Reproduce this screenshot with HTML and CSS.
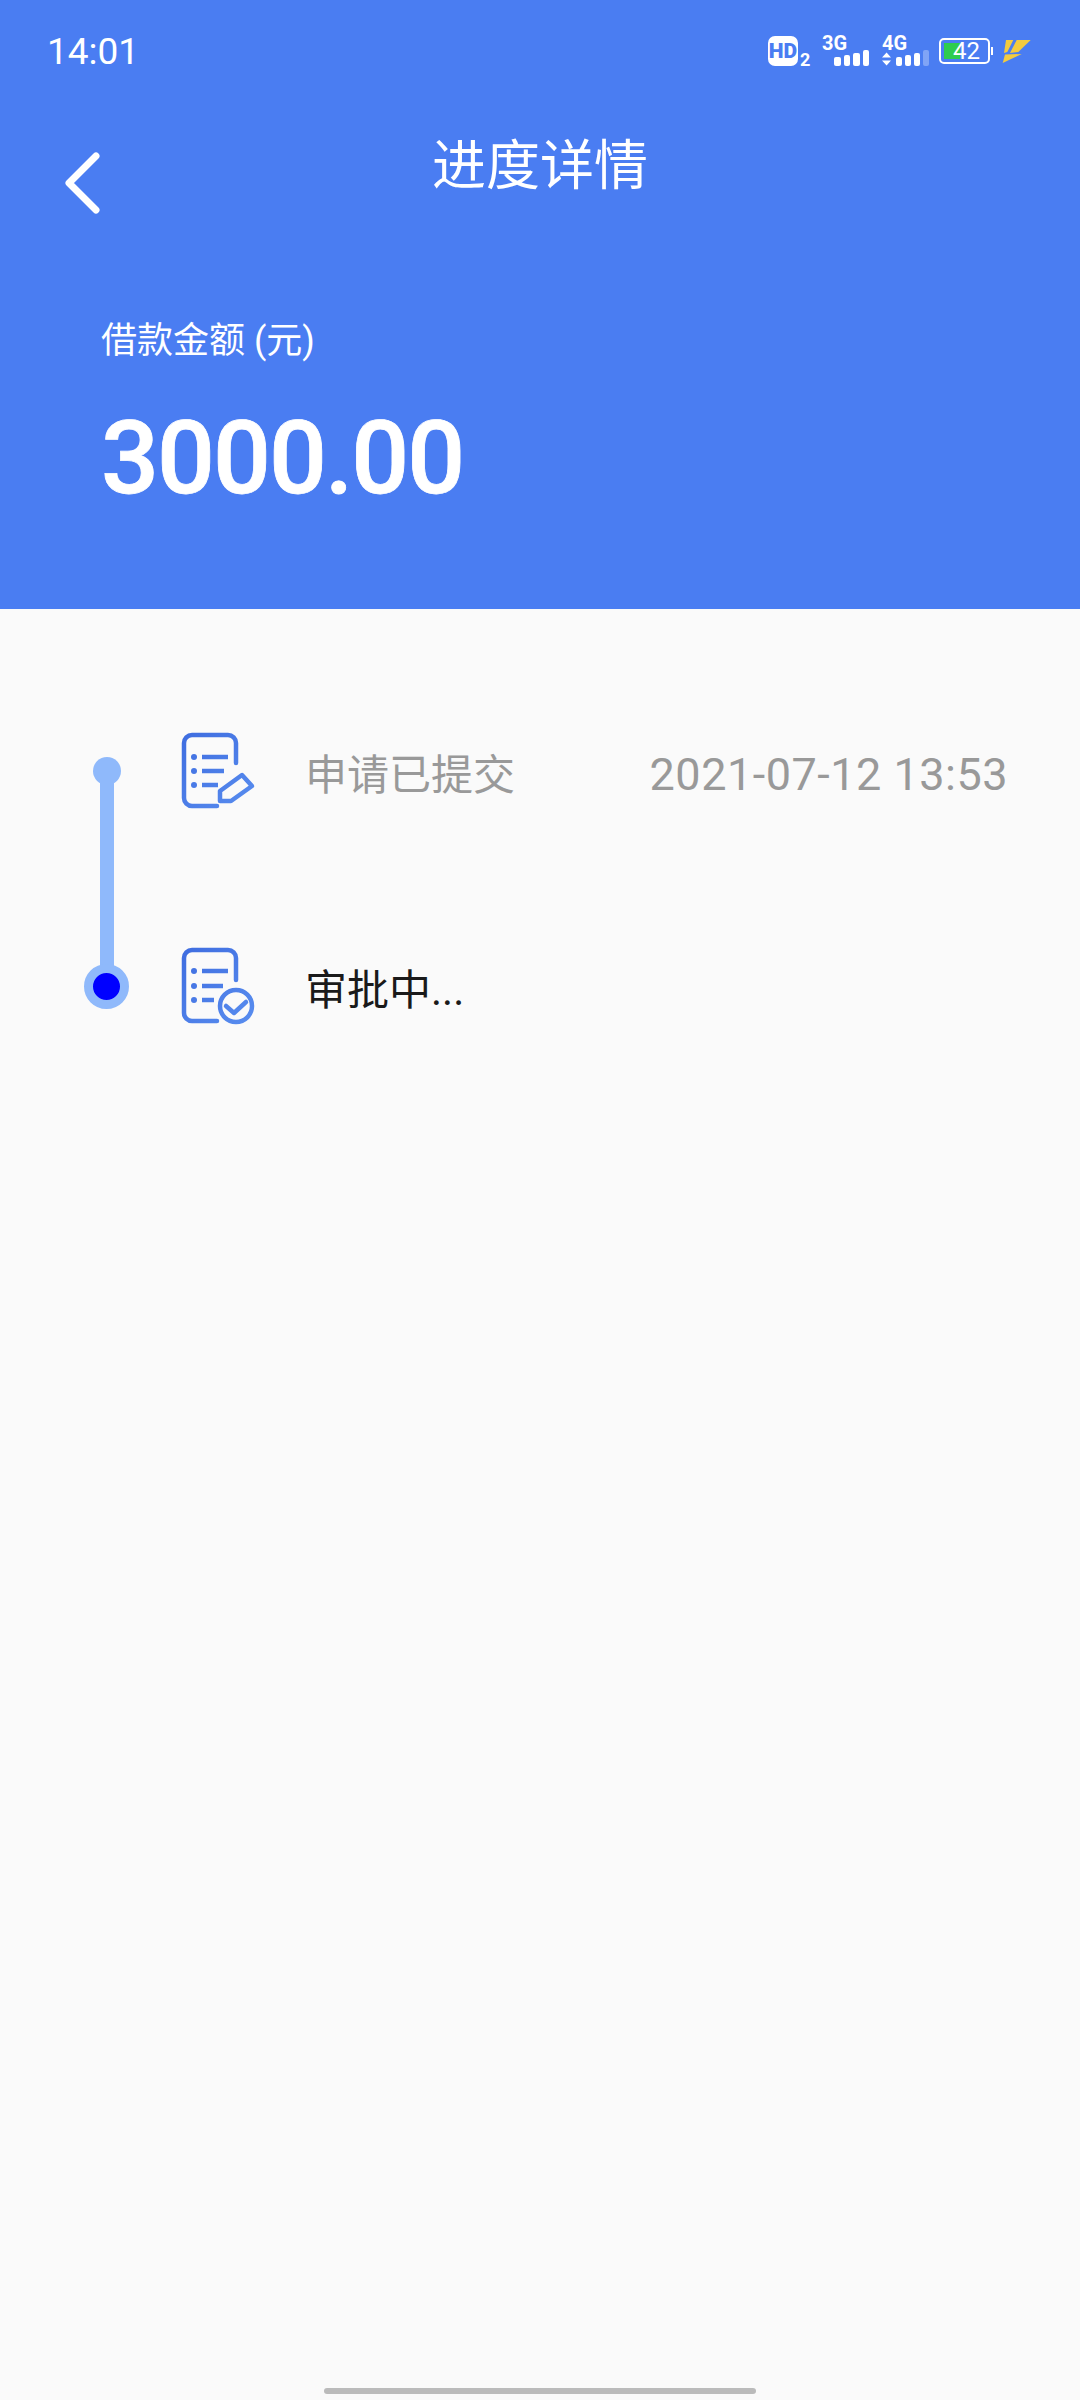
FILE: index.html
```html
<!DOCTYPE html>
<html lang="zh-CN">
<head>
    <meta charset="UTF-8">
    <meta name="viewport" content="width=device-width, initial-scale=1.0">
    <title>进度详情</title>
    <link rel="stylesheet" href="styles.css">
</head>
<body>

    <header class="header">
        <div class="status-bar">
            <span class="clock">14:01</span>
            <div class="status-icons">
                <span class="hd"><span class="hd-badge">HD</span><span class="hd-sim">2</span></span>
                <span class="signal">
                    <span class="net">3G</span>
                    <span class="bars"><i class="b1"></i><i class="b2"></i><i class="b3"></i><i class="b4"></i></span>
                </span>
                <span class="signal signal-data">
                    <span class="net">4G</span>
                    <span class="bars">
                        <svg class="arrows" width="10" height="14" viewBox="0 0 10 14"><path d="M5 0L10 5.500H0ZM5 14L0 8.500H10Z" fill="#fff"/></svg>
                        <i class="b1"></i><i class="b2"></i><i class="b3"></i><i class="b4 off"></i>
                    </span>
                </span>
                <span class="battery">
                    <span class="battery-body"><span class="battery-fill"></span><span class="battery-num">42</span></span>
                    <span class="battery-cap"></span>
                </span>
                <svg class="bolt" width="31" height="27" viewBox="0 0 31 27">
                    <path d="M4 2H11.300L5.300 14L2 15Z" fill="#f3cb3f"/>
                    <path d="M14.700 2H28.700L16.300 14L8 15Z" fill="#f3cb3f"/>
                    <path d="M0.700 25L3 16.500L19.700 16Z" fill="#f3cb3f"/>
                </svg>
            </div>
        </div>

        <div class="nav">
            <svg class="back" width="38" height="62" viewBox="0 0 38 62">
                <path d="M33 4L6 31L33 58" fill="none" stroke="#fff" stroke-width="7" stroke-linecap="round" stroke-linejoin="round"/>
            </svg>
            <h1 class="title">进度详情</h1>
        </div>

        <div class="loan">
            <p class="loan-label">借款金额 (元)</p>
            <p class="loan-amount">3000.00</p>
        </div>
    </header>

    <main class="progress">
        <div class="rail">
            <span class="rail-dot"></span>
            <span class="rail-line"></span>
            <span class="rail-end"></span>
        </div>

        <div class="steps">
            <div class="step step-done">
                <svg class="step-icon" width="78" height="82" viewBox="0 0 78 82">
                    <defs>
                        <linearGradient id="docBlue" gradientUnits="userSpaceOnUse" x1="0" y1="0" x2="78" y2="82">
                            <stop offset="0" stop-color="#3d6bdf"/>
                            <stop offset="1" stop-color="#5a8ff0"/>
                        </linearGradient>
                    </defs>
                    <g fill="none" stroke="url(#docBlue)" stroke-width="4.500">
                        <path d="M57 33V13a8 8 0 0 0-8-8H13a8 8 0 0 0-8 8V68a8 8 0 0 0 8 8H38" stroke-linecap="round"/>
                        <path d="M23 27H49M23 41H45M23 55H39"/>
                        <path d="M41 61L63 45L73 56L52 71H41Z" stroke-linejoin="round"/>
                    </g>
                    <g fill="url(#docBlue)">
                        <circle cx="15" cy="27" r="3"/>
                        <circle cx="15" cy="41" r="3"/>
                        <circle cx="15" cy="55" r="3"/>
                    </g>
                </svg>
                <span class="step-name">申请已提交</span>
                <span class="step-time">2021-07-12 13:53</span>
            </div>

            <div class="step">
                <svg class="step-icon" width="78" height="82" viewBox="0 0 78 82">
                    <g fill="none" stroke="url(#docBlue)" stroke-width="4.500">
                        <path d="M57 35V13a8 8 0 0 0-8-8H13a8 8 0 0 0-8 8V68a8 8 0 0 0 8 8H38" stroke-linecap="round"/>
                        <path d="M23 26H49M23 41H44M23 55H35"/>
                        <circle cx="57" cy="61" r="16" fill="#fafafa"/>
                        <path d="M47 61L55 68L67 57" stroke-linecap="round" stroke-linejoin="round"/>
                    </g>
                    <g fill="url(#docBlue)">
                        <circle cx="15" cy="26" r="3"/>
                        <circle cx="15" cy="41" r="3"/>
                        <circle cx="15" cy="55" r="3"/>
                    </g>
                </svg>
                <span class="step-name">审批中...</span>
            </div>
        </div>
    </main>

    <div class="home-bar"></div>

</body>
</html>
```

FILE: styles.css
```css
* {
    box-sizing: border-box;
}
body {
    margin: 0;
    height: 2400px;
    display: flex;
    flex-direction: column;
    background-color: #fafafa;
    font-family: Roboto, "Noto Sans CJK SC", sans-serif;
}
.header {
    height: 609px;
    background-color: #4a7df2;
    color: #fff;
    padding: 30px 47px 0;
}
.status-bar {
    display: flex;
    justify-content: space-between;
    align-items: center;
    height: 42px;
}
.clock {
    font-size: 37px;
}
.status-icons {
    display: flex;
    align-items: center;
}
.hd {
    display: flex;
    align-items: flex-end;
    width: 54px;
}
.hd-badge {
    width: 30px;
    height: 30px;
    border-radius: 7px;
    background: #fff;
    color: #4a7df2;
    font-size: 21px;
    font-weight: 900;
    line-height: 30px;
    text-align: center;
}
.hd-sim {
    font-size: 18px;
    font-weight: 700;
    line-height: 13px;
    margin-left: 2px;
}
.signal {
    width: 60px;
    display: flex;
    flex-direction: column;
    height: 30px;
}
.net {
    font-size: 20px;
    font-weight: 700;
    line-height: 14px;
}
.bars {
    display: flex;
    align-items: flex-end;
    justify-content: flex-end;
    gap: 3px;
    height: 16px;
    padding-right: 13px;
}
.signal-data {
    width: 57px;
}
.signal-data .bars {
    padding-right: 10px;
}
.bars i {
    display: block;
    width: 6.5px;
    background: #fff;
    border-radius: 2px;
}
.bars .b1 { height: 9px; }
.bars .b2 { height: 11px; }
.bars .b3 { height: 13px; }
.bars .b4 { height: 16px; }
.bars .off {
    background: rgba(255,255,255,0.3);
}
.arrows {
    margin-right: 2px;
}
.battery {
    display: flex;
    align-items: center;
    width: 63px;
}
.battery-body {
    position: relative;
    width: 51px;
    height: 26px;
    border: 2px solid #fff;
    border-radius: 5px;
}
.battery-fill {
    position: absolute;
    left: 3px;
    top: 3px;
    bottom: 3px;
    width: 16px;
    background: #2ecc4f;
}
.battery-num {
    position: absolute;
    left: 0;
    right: 0;
    top: 0;
    font-size: 24px;
    line-height: 22px;
    text-align: center;
    padding-left: 4px;
}
.battery-cap {
    width: 2px;
    height: 8px;
    margin-left: 1px;
    background: #fff;
}
.nav {
    position: relative;
    height: 100px;
    margin-top: 60px;
    display: flex;
    justify-content: center;
}
.back {
    position: absolute;
    left: 16px;
    top: 20px;
}
.title {
    margin: 0;
    font-size: 54px;
    font-weight: 400;
    line-height: 70px;
}
.loan {
    padding-left: 54px;
    margin-top: 86px;
}
.loan-label {
    margin: 0;
    font-size: 36px;
    line-height: 46px;
}
.loan-amount {
    margin: 39px 0 0;
    font-size: 102px;
    font-weight: 500;
    letter-spacing: -2px;
    -webkit-text-stroke: 0.8px #fff;
    line-height: 110px;
}
.progress {
    display: flex;
    padding: 148px 0 0 84px;
}
.rail {
    width: 45px;
    display: flex;
    flex-direction: column;
    align-items: center;
}
.rail-dot {
    width: 28px;
    height: 28px;
    border-radius: 50%;
    background: #8fb9fb;
}
.rail-line {
    width: 14px;
    height: 183px;
    margin-top: -2px;
    background: #8fb9fb;
}
.rail-end {
    width: 45px;
    height: 45px;
    margin-top: -2px;
    border-radius: 50%;
    background: #00f;
    border: 9px solid #8fb9fb;
}
.steps {
    flex: 1;
    display: flex;
    flex-direction: column;
    gap: 133px;
    padding: 0 72px 0 50px;
    margin-top: -27px;
}
.step {
    display: flex;
    align-items: center;
    height: 82px;
}
.step-icon {
    flex-shrink: 0;
    margin-right: 48px;
}
.step-name {
    font-size: 42px;
    color: #1a1a1a;
}
.step-done .step-name {
    color: #999;
}
.step-time {
    margin-left: auto;
    padding-top: 6px;
    font-size: 45px;
    letter-spacing: 0.5px;
    color: #999;
}
.home-bar {
    width: 432px;
    height: 6px;
    border-radius: 3px;
    background: #bbb;
    margin: auto auto 6px;
}
```
